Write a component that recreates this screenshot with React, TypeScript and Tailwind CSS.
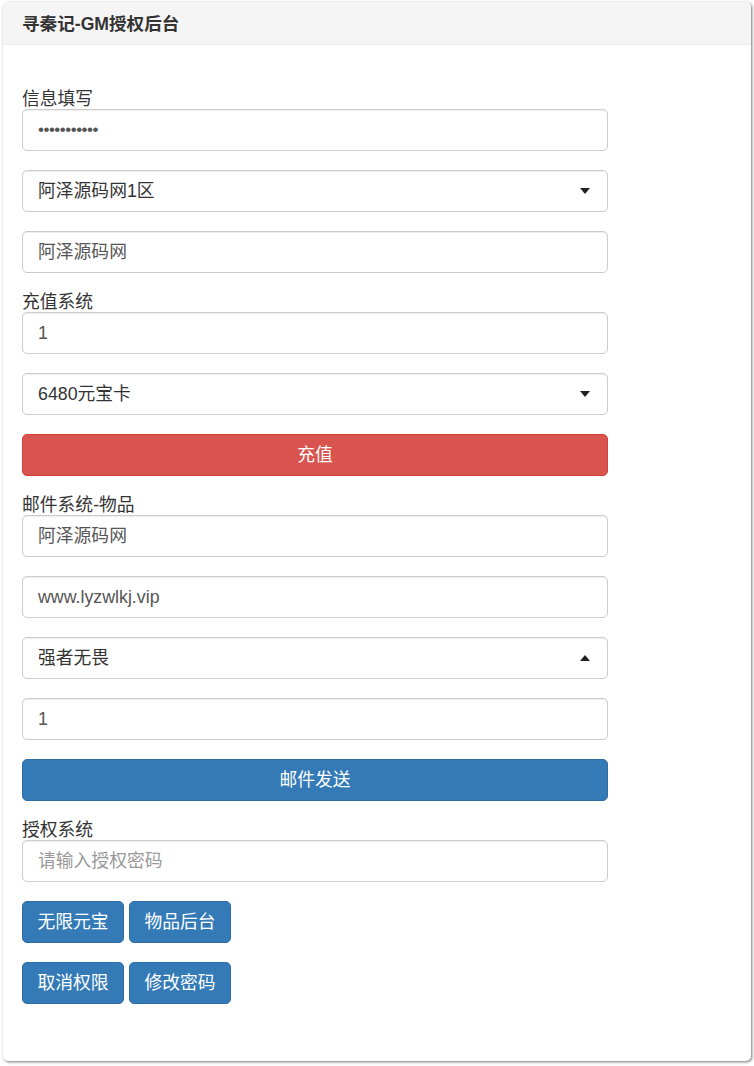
import React from "react";

const font = { fontFamily: '"Liberation Sans", "Noto Sans CJK SC", sans-serif' };

function Field({ value, placeholder }: { value?: string; placeholder?: string }) {
  return (
    <div className="mb-[19px] flex h-[42px] w-[586px] items-center rounded-[5px] border border-[#ccc] bg-white px-[15px] text-[17.8px] shadow-[inset_0_1px_1px_rgba(0,0,0,0.075)]">
      {value ? (
        <span className="text-[#555]">{value}</span>
      ) : (
        <span className="text-[#999]">{placeholder}</span>
      )}
    </div>
  );
}

function Select({ value, open }: { value: string; open?: boolean }) {
  return (
    <div className="mb-[19px] flex h-[42px] w-[586px] items-center justify-between rounded-[5px] border border-[#ccc] bg-white pl-[15px] pr-[17px] text-[17.8px] shadow-[inset_0_1px_1px_rgba(0,0,0,0.075)]">
      <span className="text-[#333]">{value}</span>
      <svg width="10" height="6" viewBox="0 0 10 6" className={open ? "rotate-180" : ""}>
        <path d="M0 0 L10 0 L5 6 Z" fill="#222" />
      </svg>
    </div>
  );
}

function Label({ children }: { children: React.ReactNode }) {
  return <div className="h-[20px] text-[17.8px] leading-[20px] text-[#333]">{children}</div>;
}

function Btn({ children, wide, red }: { children: React.ReactNode; wide?: boolean; red?: boolean }) {
  const color = red
    ? "bg-[#d9534f] border-[#d43f3a]"
    : "bg-[#337ab7] border-[#2e6da4]";
  return (
    <div
      className={`flex h-[42px] items-center justify-center rounded-[5px] border text-[17.8px] text-white ${color} ${
        wide ? "w-[586px]" : "w-[102px]"
      }`}
    >
      {children}
    </div>
  );
}

export default function App() {
  return (
    <div className="min-h-[1066px] bg-white pl-[3px] pt-[2px]" style={font}>
      <div className="h-[1059px] w-[748px] overflow-hidden rounded-[5px] bg-white shadow-[1px_1px_3px_rgba(0,0,0,0.55)]">
        <div className="flex h-[43px] items-center border-b border-[#eee] bg-[#f5f5f5] px-[19px] pt-[3px] text-[17.6px] font-bold text-[#333]">
          寻秦记-GM授权后台
        </div>
        <div className="px-[19px] pt-[44px]">
          <Label>信息填写</Label>
          <div className="mb-[19px] flex h-[42px] w-[586px] items-center rounded-[5px] border border-[#ccc] bg-white px-[15px] text-[17px] shadow-[inset_0_1px_1px_rgba(0,0,0,0.075)]">
            <span className="text-[#555] tracking-[-0.5px]">•••••••••••</span>
          </div>
          <Select value="阿泽源码网1区" />
          <Field value="阿泽源码网" />

          <Label>充值系统</Label>
          <Field value="1" />
          <Select value="6480元宝卡" />
          <div className="mb-[19px]">
            <Btn wide red>充值</Btn>
          </div>

          <Label>邮件系统-物品</Label>
          <Field value="阿泽源码网" />
          <Field value="www.lyzwlkj.vip" />
          <Select value="强者无畏" open />
          <Field value="1" />
          <div className="mb-[19px]">
            <Btn wide>邮件发送</Btn>
          </div>

          <Label>授权系统</Label>
          <Field placeholder="请输入授权密码" />
          <div className="mb-[19px] flex gap-[5px]">
            <Btn>无限元宝</Btn>
            <Btn>物品后台</Btn>
          </div>
          <div className="flex gap-[5px]">
            <Btn>取消权限</Btn>
            <Btn>修改密码</Btn>
          </div>
        </div>
      </div>
    </div>
  );
}
